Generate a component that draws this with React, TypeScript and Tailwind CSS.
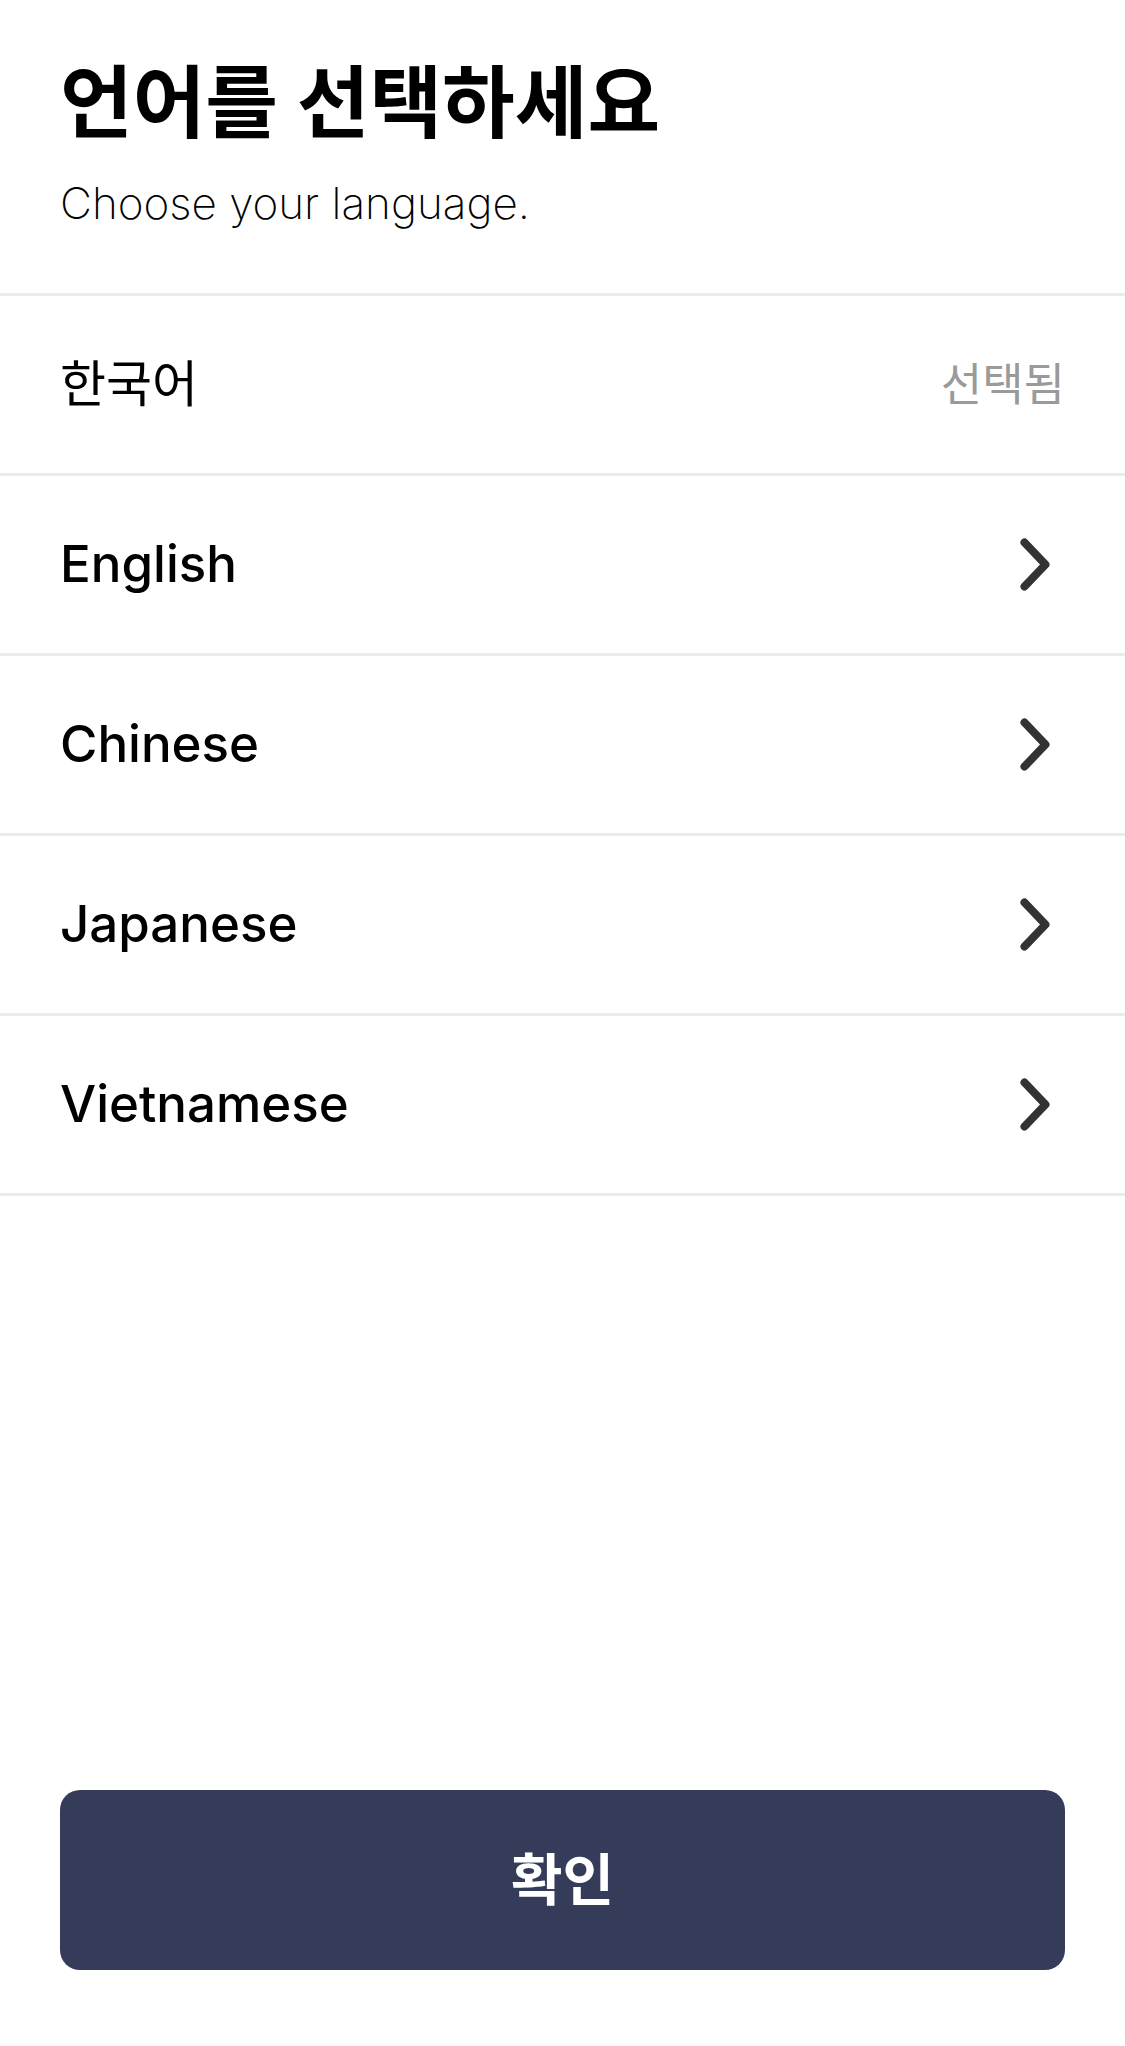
import React from "react";

const Chevron = () => (
  <svg width="30" height="53" viewBox="0 0 30 53" fill="none" className="mr-[15px]">
    <polyline points="4.5,4.5 25.5,26.5 4.5,48.5" stroke="#333333" strokeWidth="8" strokeLinecap="round" strokeLinejoin="round" />
  </svg>
);

const langs = ["English", "Chinese", "Japanese", "Vietnamese"];

export default function App() {
  return (
    <div
      className="w-[1125px] h-[2046px] bg-white flex flex-col"
      style={{ fontFamily: 'Inter, "Noto Sans CJK KR", sans-serif' }}
    >
      <div className="h-[293px] px-[60px] pt-[58px] flex flex-col">
        <h1 className="text-[79px] leading-[90px] font-bold text-black">언어를 선택하세요</h1>
        <p className="mt-[27px] text-[44px] leading-[56px] font-extralight text-black">Choose your language.</p>
      </div>
      <div className="h-[3px] bg-[#ebebeb]" />
      <div className="h-[177px] px-[60px] flex items-center justify-between">
        <span className="text-[50px] font-normal text-black">한국어</span>
        <span className="text-[45px] font-normal text-[#9a9a9a]">선택됨</span>
      </div>
      <div className="h-[3px] bg-[#ebebeb]" />
      {langs.map((l) => (
        <React.Fragment key={l}>
          <div className="h-[177px] px-[60px] flex items-center justify-between">
            <span className="text-[51px] font-medium text-black">{l}</span>
            <Chevron />
          </div>
          <div className="h-[3px] bg-[#ebebeb]" />
        </React.Fragment>
      ))}
      <div className="flex-1" />
      <div className="px-[60px] pb-[76px]">
        <button className="w-full h-[180px] rounded-[20px] bg-[#343c5a] text-white text-[56px] font-semibold">
          확인
        </button>
      </div>
    </div>
  );
}
